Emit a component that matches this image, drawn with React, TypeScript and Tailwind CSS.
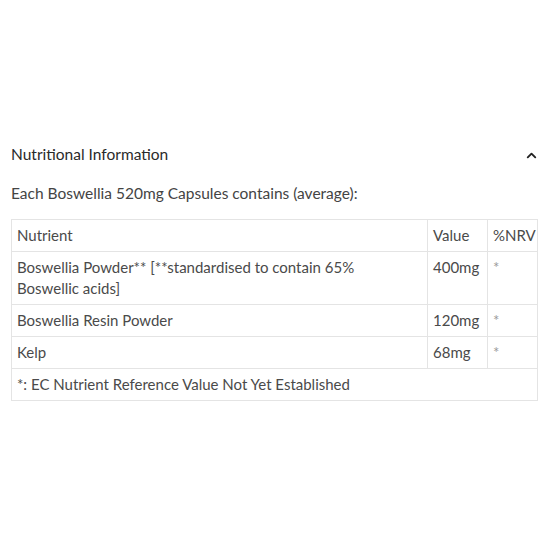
import { ChevronUp } from "lucide-react";

const rows = [
  { name: ["Boswellia Powder** [**standardised to contain 65%", "Boswellic acids]"], value: "400mg", nrv: "*" },
  { name: ["Boswellia Resin Powder"], value: "120mg", nrv: "*" },
  { name: ["Kelp"], value: "68mg", nrv: "*" },
];

const cell = "border border-[#e4e4e4] px-[5px] py-[5px] text-left align-top font-normal";

export default function App() {
  return (
    <div className="w-[550px] h-[550px] bg-white font-['Lato',sans-serif] text-[#4a4a4a]">
      <div className="pt-[144px] px-[11px]">
        {/* header */}
        <div className="flex items-center justify-between h-[22px]">
          <span className="text-[15.5px] text-[#2a2a2a]">Nutritional Information</span>
          <ChevronUp className="w-[15px] h-[15px] mr-0 text-[#222]" strokeWidth={3} />
        </div>

        <p className="mt-[16px] text-[15.5px] leading-[22px] text-[#444]">
          Each Boswellia 520mg Capsules contains (average):
        </p>

        {/* table */}
        <table className="mt-[15px] w-[527px] table-fixed border-collapse text-[15px] leading-[21px]">
          <colgroup>
            <col className="w-[416px]" />
            <col className="w-[60px]" />
            <col />
          </colgroup>
          <thead>
            <tr>
              <th className={cell}>Nutrient</th>
              <th className={cell}>Value</th>
              <th className={cell}>%NRV</th>
            </tr>
          </thead>
          <tbody>
            {rows.map((r) => (
              <tr key={r.value}>
                <td className={cell}>
                  {r.name.map((line, i) => (
                    <span key={i} className="block">{line}</span>
                  ))}
                </td>
                <td className={cell}>{r.value}</td>
                <td className={`${cell} text-[#9a9a9a]`}>{r.nrv}</td>
              </tr>
            ))}
            <tr>
              <td colSpan={3} className={cell}>
                *: EC Nutrient Reference Value Not Yet Established
              </td>
            </tr>
          </tbody>
        </table>
      </div>
    </div>
  );
}
